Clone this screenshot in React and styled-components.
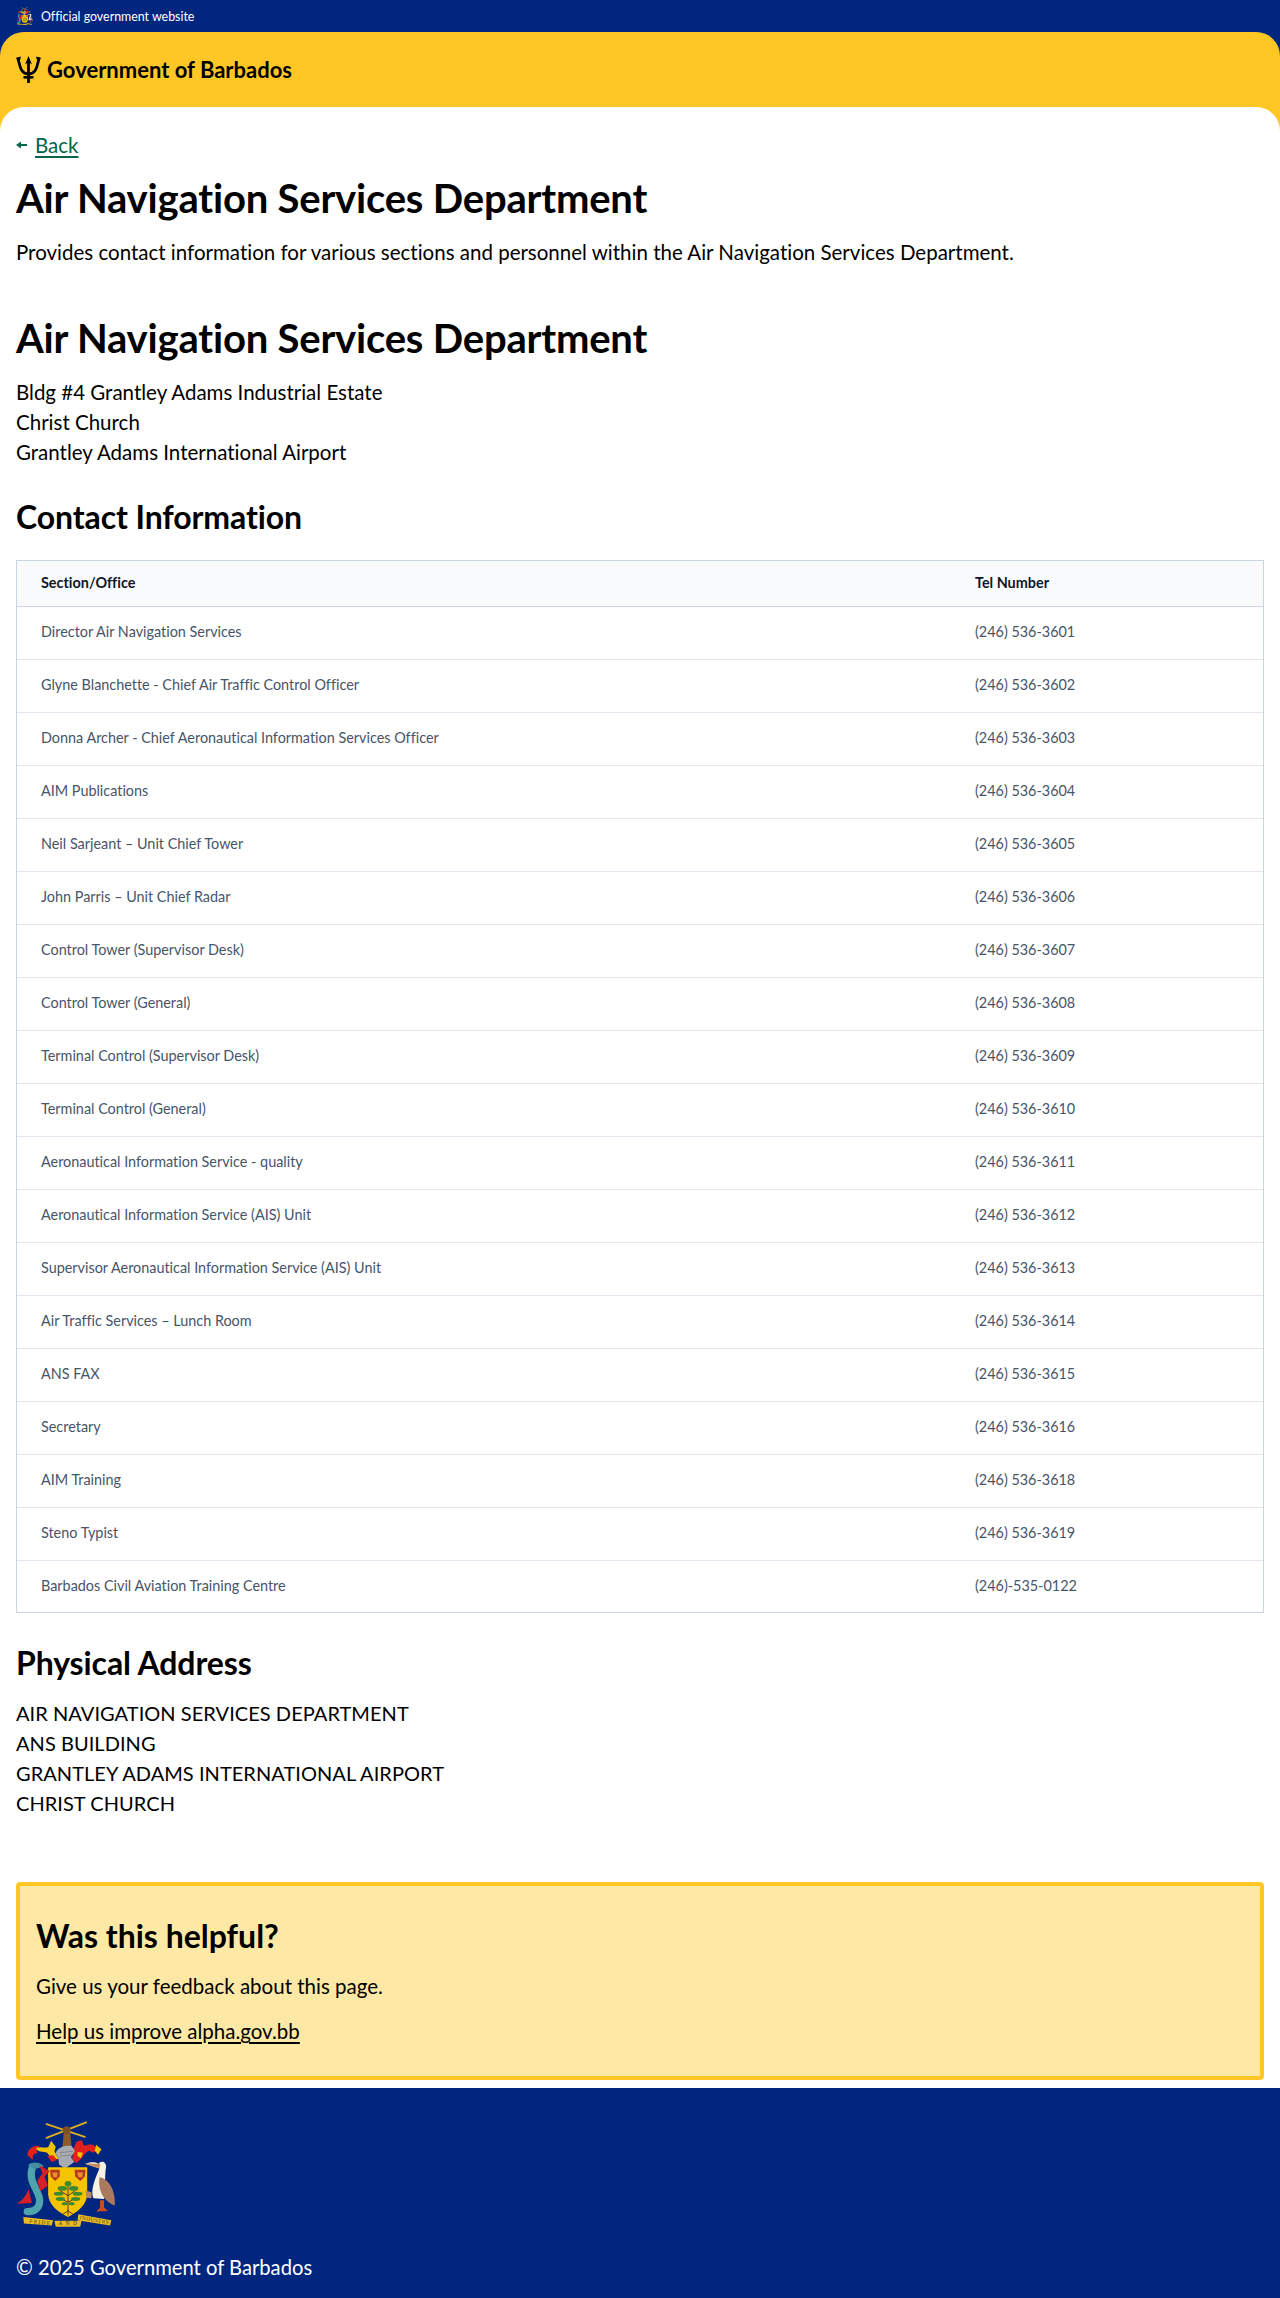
import React from "react";
import styled, { createGlobalStyle } from "styled-components";

const GlobalStyle = createGlobalStyle`
  html, body { margin: 0; padding: 0; background: #fff; }
  body {
    font-family: "Lato", "Noto Sans", sans-serif;
    font-variant-ligatures: none;
    color: #000;
  }
`;

const TopWrap = styled.div`
  background: #00267f;
`;

const TopBar = styled.div`
  height: 32px;
  display: flex;
  align-items: center;
  gap: 8px;
  padding: 0 16px;
  color: #fff;
  font-size: 12.4px;
`;

const Banner = styled.header`
  background: #ffc726;
  height: 75px;
  border-radius: 24px 24px 0 0;
  display: flex;
  align-items: center;
  gap: 6px;
  padding: 0 16px;
  font-size: 22px;
  font-weight: 700;
`;

const MainWrap = styled.div`
  background: #ffc726;
`;

const Main = styled.main`
  background: #fff;
  border-radius: 24px 24px 0 0;
  padding: 23px 16px 8px;
`;

const BackRow = styled.div`
  display: flex;
  align-items: center;
  gap: 8px;
  height: 30px;
`;

const BackLink = styled.a`
  color: #00654a;
  font-size: 20.5px;
  line-height: 30px;
  text-decoration: underline;
  text-decoration-thickness: 2px;
  text-underline-offset: 3px;
`;

const PageTitle = styled.h1`
  font-size: 40px;
  line-height: 48px;
  font-weight: 700;
  letter-spacing: -0.2px;
  margin: ${(p) => p.$top}px 0 15px;
`;

const Text = styled.p`
  font-size: 20.5px;
  line-height: 30px;
  margin: 0;
`;

const CapsText = styled.p`
  font-size: 20px;
  line-height: 30px;
  letter-spacing: 0.05px;
  margin: 0;
`;

const SectionTitle = styled.h2`
  font-size: 32px;
  line-height: 40px;
  font-weight: 700;
  letter-spacing: -0.1px;
  margin: 30px 0 ${(p) => p.$bottom}px;
`;

const TableWrap = styled.div`
  border: 1px solid #cbd5e1;
`;

const Table = styled.table`
  width: 100%;
  table-layout: fixed;
  border-collapse: collapse;
  font-size: 14.4px;
`;

const HeadCell = styled.th`
  box-sizing: border-box;
  height: 45px;
  padding: 0 24px 2px;
  text-align: left;
  font-weight: 700;
  color: #0f172a;
  background: #f8fafc;
  border-bottom: 1px solid #cbd5e1;
  width: ${(p) => p.$width || "auto"};
`;

const Row = styled.tr`
  height: 53px;
  border-bottom: 1px solid #e2e8f0;

  &:last-child {
    border-bottom: none;
    height: 52px;
  }
`;

const Cell = styled.td`
  padding: 0 24px 2px;
  color: #475569;
`;

const Helpful = styled.section`
  margin-top: 64px;
  padding: 30px 16px;
  background: #fee8a5;
  border: 4px solid #ffc726;
  border-radius: 4px;
`;

const HelpfulTitle = styled.h2`
  font-size: 32px;
  line-height: 40px;
  font-weight: 700;
  margin: 0 0 15px;
`;

const HelpfulLink = styled.a`
  display: inline-block;
  margin-top: 15px;
  color: #000;
  font-size: 20.5px;
  line-height: 30px;
  text-decoration: underline;
  text-underline-offset: 3px;
`;

const Footer = styled.footer`
  background: #00267f;
  color: #fff;
  padding: 32px 16px 16px;
  font-size: 20.2px;
  line-height: 30px;
`;

const FooterCrest = styled.div`
  height: 107px;
  margin-bottom: 25px;
`;

const Crest = ({ width, height }) => (
  <svg width={width} height={height} viewBox="18 14 302 322" aria-hidden="true">
    <path d="M108 25 L228 65 M108 68 L232 20" stroke="#dcae1d" strokeWidth="6" fill="none" />
    <path d="M162 52 L182 52 L186 98 L158 98 Z" fill="#8a5a2b" />
    <circle cx="171" cy="44" r="12" fill="#7c4f27" />
    <path d="M52 118 C54 100 72 88 90 92 C82 100 78 108 84 112 L70 118 L68 134 Z" fill="#e0201c" />
    <path d="M78 98 C96 92 108 100 116 94 L124 76 L138 94 L134 108 L148 132 L128 130 L118 120 L112 112 C100 108 84 112 78 98 Z" fill="#f2c200" />
    <path d="M112 122 L130 120 L142 134 L126 140 Z" fill="#e0201c" />
    <path d="M190 104 L200 80 L216 74 L224 92 C240 84 258 86 264 104 L250 112 L240 106 C230 108 224 118 216 130 L200 144 L188 132 Z" fill="#e0201c" />
    <path d="M260 88 L276 102 L266 118 L256 106 Z" fill="#f2c200" />
    <path d="M204 110 L220 112 L214 128 L204 122 Z" fill="#f2c200" />
    <path d="M138 114 C142 96 168 88 186 92 L196 106 L184 126 L194 140 L166 160 L148 148 L146 128 Z" fill="#a8abb0" />
    <path d="M150 112 L190 108 M150 122 L186 120" stroke="#6f7378" strokeWidth="2" fill="none" />
    <path d="M115 156 L233 156 L233 238 Q230 280 175 306 Q118 280 115 238 Z" fill="#f5c400" />
    <path d="M121 164 L150 164 L150 184 L136 198 L123 184 Z M195 164 L228 164 L226 184 L212 198 L197 184 Z" fill="#b8341e" />
    <path d="M128 172 L144 172 L142 186 L130 186 Z M203 172 L220 172 L218 186 L206 186 Z" fill="#e2952b" />
    <path d="M175 198 L175 290 M175 242 L150 226 M175 242 L200 224 M175 262 L152 250 M175 262 L200 248 M175 288 L160 298 M175 288 L190 298 M175 284 L175 302" stroke="#5b3a1e" strokeWidth="3" fill="none" />
    <g fill="#3f8a30">
      <ellipse cx="175" cy="206" rx="10" ry="8" />
      <ellipse cx="158" cy="220" rx="14" ry="7" />
      <ellipse cx="192" cy="220" rx="14" ry="7" />
      <ellipse cx="147" cy="236" rx="15" ry="6" />
      <ellipse cx="204" cy="236" rx="15" ry="6" />
      <ellipse cx="152" cy="252" rx="14" ry="6" />
      <ellipse cx="198" cy="252" rx="14" ry="6" />
      <ellipse cx="165" cy="266" rx="9" ry="5" />
      <ellipse cx="186" cy="266" rx="9" ry="5" />
    </g>
    <path d="M68 156 C54 190 78 216 88 246 C94 272 80 292 52 290" stroke="#4fa3ad" strokeWidth="22" fill="none" strokeLinecap="round" />
    <path d="M54 150 C66 138 92 140 102 154 L74 162 Z" fill="#3f8fa0" />
    <path d="M88 150 L120 168 L104 184 L114 212 L92 228 L82 198 L98 174 Z" fill="#d81f26" />
    <path d="M56 222 L66 264 L20 266 C36 258 48 244 56 222 Z" fill="#d81f26" />
    <path d="M228 146 C240 138 262 140 268 146 C272 134 292 138 290 156 C286 176 288 210 284 252 L252 250 C242 230 254 196 270 160 Z" fill="#f5f2e4" />
    <path d="M224 144 L272 146 L270 160 Z" fill="#c98a5a" />
    <path d="M270 186 C294 188 320 222 316 272 C292 262 264 238 270 186 Z" fill="#a97a5e" />
    <path d="M228 226 L246 232 L246 250 L230 248 Z" fill="#b98a60" />
    <path d="M272 256 L284 256 L284 278 L296 288 L260 290 L272 278 Z" fill="#c8501e" />
    <path d="M40 306 L130 316 L126 332 L42 326 Z M134 318 L216 318 L212 336 L138 336 Z M206 298 L306 316 L302 332 L204 316 Z" fill="#e8bb24" />
    <text x="58" y="324" fontSize="16" fill="#4a3a10" fontFamily="Liberation Serif, serif" textLength="62" transform="rotate(6 58 324)">PRIDE</text>
    <text x="146" y="332" fontSize="16" fill="#4a3a10" fontFamily="Liberation Serif, serif" textLength="56">AND</text>
    <text x="210" y="313" fontSize="16" fill="#4a3a10" fontFamily="Liberation Serif, serif" textLength="90" transform="rotate(10 210 313)">INDUSTRY</text>
  </svg>
);

const Trident = () => (
  <svg width="25" height="27" viewBox="0 0 25 27" aria-hidden="true">
    <path d="M12.5 0 L16 8.5 L13.9 7 L13.9 27 L11.1 27 L11.1 7 L9 8.5 Z" fill="#000" />
    <path d="M1.6 1.5 C4 8 3.5 17.5 12.5 18 C21.5 17.5 21 8 23.4 1.5" stroke="#000" strokeWidth="2.8" fill="none" />
    <path d="M0 2 L5 0.5 L3.5 6 Z M25 2 L20 0.5 L21.5 6 Z" fill="#000" />
    <rect x="7.5" y="20" width="10" height="2.6" fill="#000" />
  </svg>
);

const BackArrow = () => (
  <svg width="11" height="8" viewBox="0 0 11 8" aria-hidden="true">
    <path d="M0 4 L5 0.5 L5 3 L11 3 L11 5 L5 5 L5 7.5 Z" fill="#00654a" />
  </svg>
);

const contacts = [
  ["Director Air Navigation Services", "(246) 536-3601"],
  ["Glyne Blanchette - Chief Air Traffic Control Officer", "(246) 536-3602"],
  ["Donna Archer - Chief Aeronautical Information Services Officer", "(246) 536-3603"],
  ["AIM Publications", "(246) 536-3604"],
  ["Neil Sarjeant – Unit Chief Tower", "(246) 536-3605"],
  ["John Parris – Unit Chief Radar", "(246) 536-3606"],
  ["Control Tower (Supervisor Desk)", "(246) 536-3607"],
  ["Control Tower (General)", "(246) 536-3608"],
  ["Terminal Control (Supervisor Desk)", "(246) 536-3609"],
  ["Terminal Control (General)", "(246) 536-3610"],
  ["Aeronautical Information Service - quality", "(246) 536-3611"],
  ["Aeronautical Information Service (AIS) Unit", "(246) 536-3612"],
  ["Supervisor Aeronautical Information Service (AIS) Unit", "(246) 536-3613"],
  ["Air Traffic Services – Lunch Room", "(246) 536-3614"],
  ["ANS FAX", "(246) 536-3615"],
  ["Secretary", "(246) 536-3616"],
  ["AIM Training", "(246) 536-3618"],
  ["Steno Typist", "(246) 536-3619"],
  ["Barbados Civil Aviation Training Centre", "(246)-535-0122"],
];

export default function App() {
  return (
    <>
      <GlobalStyle />
      <TopWrap>
        <TopBar>
          <Crest width={17} height={18} />
          Official government website
        </TopBar>
        <Banner>
          <Trident />
          Government of Barbados
        </Banner>
      </TopWrap>
      <MainWrap>
        <Main>
          <BackRow>
            <BackArrow />
            <BackLink href="#">Back</BackLink>
          </BackRow>
          <PageTitle $top={14}>Air Navigation Services Department</PageTitle>
          <Text>Provides contact information for various sections and personnel within the Air Navigation Services Department.</Text>
          <PageTitle $top={47}>Air Navigation Services Department</PageTitle>
          <Text>Bldg #4 Grantley Adams Industrial Estate</Text>
          <Text>Christ Church</Text>
          <Text>Grantley Adams International Airport</Text>
          <SectionTitle $bottom={23}>Contact Information</SectionTitle>
          <TableWrap>
            <Table>
              <thead>
                <tr>
                  <HeadCell $width="934px">Section/Office</HeadCell>
                  <HeadCell>Tel Number</HeadCell>
                </tr>
              </thead>
              <tbody>
                {contacts.map(([name, tel]) => (
                  <Row key={name}>
                    <Cell>{name}</Cell>
                    <Cell>{tel}</Cell>
                  </Row>
                ))}
              </tbody>
            </Table>
          </TableWrap>
          <SectionTitle $bottom={15}>Physical Address</SectionTitle>
          <CapsText>AIR NAVIGATION SERVICES DEPARTMENT</CapsText>
          <CapsText>ANS BUILDING</CapsText>
          <CapsText>GRANTLEY ADAMS INTERNATIONAL AIRPORT</CapsText>
          <CapsText>CHRIST CHURCH</CapsText>
          <Helpful>
            <HelpfulTitle>Was this helpful?</HelpfulTitle>
            <Text>Give us your feedback about this page.</Text>
            <HelpfulLink href="#">Help us improve alpha.gov.bb</HelpfulLink>
          </Helpful>
        </Main>
      </MainWrap>
      <Footer>
        <FooterCrest>
          <Crest width={100} height={107} />
        </FooterCrest>
        © 2025 Government of Barbados
      </Footer>
    </>
  );
}
